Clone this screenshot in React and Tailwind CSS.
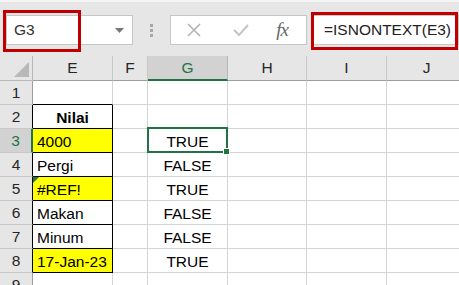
import React from "react";

const font = { fontFamily: '"Liberation Sans", Arial, sans-serif' };

const cols = ["E", "F", "G", "H", "I", "J"];

const rows = [
  { n: 1, e: "", g: "" },
  { n: 2, e: "Nilai", g: "", bold: true },
  { n: 3, e: "4000", g: "TRUE", yellow: true },
  { n: 4, e: "Pergi", g: "FALSE" },
  { n: 5, e: "#REF!", g: "TRUE", yellow: true, flag: true },
  { n: 6, e: "Makan", g: "FALSE" },
  { n: 7, e: "Minum", g: "FALSE" },
  { n: 8, e: "17-Jan-23", g: "TRUE", yellow: true },
  { n: 9, e: "", g: "" },
  { n: 10, e: "", g: "" },
];

function Toolbar() {
  return (
    <div className="relative h-[56px] bg-[#e6e6e6] border-t-2 border-t-[#f4f4f4]">
      <div className="flex items-start pt-[13px]">
        {/* name box */}
        <div className="ml-[6px] w-[127px] h-[30px] bg-white border border-[#c6c6c6] flex items-center justify-between pl-[7px] pr-[8px]">
          <span className="text-[15.5px] text-[#333]">G3</span>
          <svg width="9" height="5" viewBox="0 0 9 5">
            <polygon points="0,0 9,0 4.5,5" fill="#777" />
          </svg>
        </div>

        {/* grip dots */}
        <div className="w-[37px] h-[30px] flex flex-col items-center justify-center gap-[2px]">
          <div className="w-[3px] h-[3px] bg-[#a6a6a6]" />
          <div className="w-[3px] h-[3px] bg-[#a6a6a6]" />
          <div className="w-[3px] h-[3px] bg-[#a6a6a6]" />
        </div>

        {/* cancel / enter / fx */}
        <div className="w-[137px] h-[30px] bg-white border border-[#c6c6c6] flex items-center">
          <div className="w-[46px] flex justify-center">
            <svg width="14" height="14" viewBox="0 0 14 14">
              <path d="M1 1 L13 13 M13 1 L1 13" stroke="#b4b4b4" strokeWidth="1.6" fill="none" />
            </svg>
          </div>
          <div className="w-[48px] flex justify-center">
            <svg width="16" height="12" viewBox="0 0 16 12">
              <path d="M1 6 L6 11 L15 1" stroke="#c4c4c4" strokeWidth="2" fill="none" />
            </svg>
          </div>
          <div className="w-[34px] flex justify-center">
            <span
              className="italic text-[19px] text-[#666] tracking-[-1px]"
              style={{ fontFamily: '"Liberation Serif", "Times New Roman", serif' }}
            >
              fx
            </span>
          </div>
        </div>

        {/* formula input */}
        <div className="ml-[6px] flex-1 h-[30px] bg-white border border-[#c6c6c6] flex items-center pl-[10px]">
          <span className="text-[15.5px] text-[#222]">=ISNONTEXT(E3)</span>
        </div>
      </div>

      {/* red annotation boxes */}
      <div className="absolute left-[3px] top-[8px] w-[78px] h-[42px] border-[3px] border-[#c00000]" />
      <div className="absolute left-[311px] top-[10px] w-[147px] h-[38px] border-[3px] border-[#c00000]" />
    </div>
  );
}

function Corner() {
  return (
    <div className="bg-[#e6e6e6] border-r border-b border-[#b8b8b8] flex items-end justify-end pr-[3px] pb-[3px]">
      <svg width="15" height="15" viewBox="0 0 15 15">
        <polygon points="15,0 15,15 0,15" fill="#b8b8b8" />
      </svg>
    </div>
  );
}

function ColHeader({ c }) {
  const active = c === "G";
  return (
    <div
      className={
        active
          ? "bg-[#d2d2d2] border-r border-r-[#b8b8b8] border-b-2 border-b-[#217346] text-[#217346] flex items-center justify-center text-[15.5px]"
          : "bg-[#e6e6e6] border-r border-r-[#c8c8c8] border-b border-b-[#9e9e9e] text-[#262626] flex items-center justify-center text-[15.5px]"
      }
    >
      {c}
    </div>
  );
}

function RowHeader({ r }) {
  const active = r.n === 3;
  const inTable = r.n >= 2 && r.n <= 8;
  let cls = "bg-[#e6e6e6] border-b border-b-[#c8c8c8] text-[#262626] border-r border-r-[#9e9e9e]";
  if (inTable) cls = "bg-[#e6e6e6] border-b border-b-[#c8c8c8] text-[#262626] border-r border-r-black";
  if (active) cls = "bg-[#d2d2d2] border-b border-b-[#c8c8c8] text-[#217346] border-r-2 border-r-[#217346]";
  return <div className={cls + " flex items-center justify-center pt-[1px] text-[15.5px]"}>{r.n}</div>;
}

function ECell({ r }) {
  const inTable = r.n >= 2 && r.n <= 8;
  let cls = "relative text-[15.5px] text-black flex items-center pt-[2px] ";
  cls += r.yellow ? "bg-[#ffff00] " : "bg-white ";
  if (inTable) cls += "border-r border-r-black border-b border-b-black ";
  else if (r.n === 1) cls += "border-r border-r-[#d4d4d4] border-b border-b-black ";
  else cls += "border-r border-r-[#d4d4d4] border-b border-b-[#d4d4d4] ";
  cls += r.bold ? "justify-center font-bold" : "pl-[4px]";
  return (
    <div className={cls}>
      {r.flag && (
        <div className="absolute left-0 top-0 w-0 h-0 border-t-[6px] border-t-[#1e7a3c] border-r-[6px] border-r-transparent" />
      )}
      {r.e}
    </div>
  );
}

function PlainCell() {
  return <div className="bg-white border-r border-b border-[#d4d4d4]" />;
}

function GCell({ r }) {
  const selected = r.n === 3;
  return (
    <div className="relative bg-white border-r border-b border-[#d4d4d4] flex items-center justify-center pt-[2px] text-[15.5px] text-black">
      {r.g}
      {selected && (
        <div className="absolute -left-[1px] -top-[2px] -right-[1px] -bottom-[1px] border-2 border-[#217346] z-10">
          <div className="absolute -right-[4px] -bottom-[4px] w-[7px] h-[7px] bg-[#217346] border border-white" />
        </div>
      )}
    </div>
  );
}

export default function App() {
  return (
    <div className="w-[459px] h-[285px] overflow-hidden bg-white" style={font}>
      <Toolbar />
      <div className="grid grid-cols-[33px_80px_35px_80px_79px_80px_80px] grid-rows-[25px] auto-rows-[24px]">
        <Corner />
        {cols.map((c) => (
          <ColHeader key={c} c={c} />
        ))}
        {rows.map((r) => (
          <React.Fragment key={r.n}>
            <RowHeader r={r} />
            <ECell r={r} />
            <PlainCell />
            <GCell r={r} />
            <PlainCell />
            <PlainCell />
            <PlainCell />
          </React.Fragment>
        ))}
      </div>
    </div>
  );
}
